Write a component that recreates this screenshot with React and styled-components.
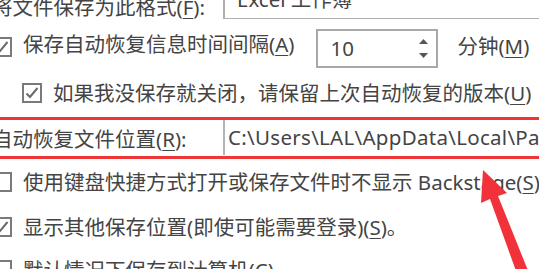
import React from 'react'
import styled, { createGlobalStyle } from 'styled-components'

const GlobalStyle = createGlobalStyle`
  html, body {
    margin: 0;
    padding: 0;
    background: #ffffff;
    overflow: hidden;
  }
  body {
    width: 539px;
    height: 269px;
    position: relative;
    font-family: "Noto Sans", "Noto Sans CJK SC", sans-serif;
    color: #444444;
  }
`

const Page = styled.div`
  margin: -20px 0 0 -8px;
  width: 600px;
`

const Row = styled.div`
  display: flex;
  align-items: ${p => p.$align || 'center'};
  height: ${p => p.$h}px;
  padding-left: ${p => p.$indent || 0}px;
  box-sizing: border-box;
  white-space: nowrap;
`

const FieldRow = styled.div`
  display: grid;
  grid-template-columns: 231px 1fr;
  align-items: ${p => p.$align || 'center'};
  height: ${p => p.$h}px;
  box-sizing: border-box;
  white-space: nowrap;
`

const Text = styled.span`
  font-size: 20.5px;
  line-height: 26px;
  padding-left: ${p => p.$pl || 0}px;
  padding-top: ${p => p.$pt || 0}px;
  padding-bottom: ${p => p.$pb || 0}px;
`

const Key = styled.u`
  text-decoration-thickness: 1px;
  text-underline-offset: 3px;
`

const Box = styled.span`
  flex: none;
  width: 20px;
  height: 20px;
  box-sizing: border-box;
  border: 2px solid #7a7a7a;
  margin-right: 11px;
  display: flex;
  align-items: center;
  justify-content: center;
`

const Select = styled.div`
  height: 39px;
  box-sizing: border-box;
  border: 1.5px solid #b0b0b0;
  border-left-width: 2px;
  padding-left: 12px;
  font-size: 20.5px;
  line-height: 36px;
`

const Spin = styled.div`
  display: flex;
  align-items: center;
  justify-content: space-between;
  width: 122px;
  height: 39px;
  box-sizing: border-box;
  border: 2px solid #a8a8a8;
  margin: 2px 19px 0 22px;
  padding: 0 8px 0 12px;
  font-size: 20.5px;
`

const Arrows = styled.div`
  display: flex;
  flex-direction: column;
  gap: 9px;
`

const RedBox = styled.div`
  border-top: 3.5px solid #ef3535;
  border-bottom: 3.5px solid #ef3535;
  height: 42px;
  box-sizing: border-box;
`

const PathField = styled.div`
  height: 100%;
  border-left: 2px solid #b4b4b4;
  padding-left: 3px;
  font-size: 20.5px;
  line-height: 35px;
  letter-spacing: 0.3px;
  overflow: hidden;
`

const Overlay = styled.svg`
  position: absolute;
  left: 0;
  top: 0;
  pointer-events: none;
`

const Check = ({ on }) => (
  <Box>
    {on && (
      <svg width="16" height="16" viewBox="0 0 16 16">
        <polyline points="2.5,8.5 6,12 13.5,3" fill="none" stroke="#6a6a6a" strokeWidth="2" />
      </svg>
    )}
  </Box>
)

const App = () => {
  return (
    <>
      <GlobalStyle />
      <Page>
        <FieldRow $h={46} $align="start">
          <Text $pt={14}>将文件保存为此格式(<Key>F</Key>):</Text>
          <Select>Excel 工作簿</Select>
        </FieldRow>

        <Row $h={42}>
          <Check on />
          <Text $pb={6}>保存自动恢复信息时间间隔(<Key>A</Key>)</Text>
          <Spin>
            <span>10</span>
            <Arrows>
              <svg width="9" height="5" viewBox="0 0 9 5"><polygon points="4.5,0 9,5 0,5" fill="#555" /></svg>
              <svg width="9" height="5" viewBox="0 0 9 5"><polygon points="0,0 9,0 4.5,5" fill="#555" /></svg>
            </Arrows>
          </Spin>
          <Text $pb={2}>分钟(<Key>M</Key>)</Text>
        </Row>

        <Row $h={49} $indent={30}>
          <Check on />
          <Text>如果我没保存就关闭，请保留上次自动恢复的版本(<Key>U</Key>)</Text>
        </Row>

        <RedBox>
          <FieldRow $h={35}>
            <Text $pt={2}>自动恢复文件位置(<Key>R</Key>):</Text>
            <PathField>C:\Users\LAL\AppData\Local\Packages</PathField>
          </FieldRow>
        </RedBox>

        <Row $h={46}>
          <Check />
          <Text>使用键盘快捷方式打开或保存文件时不显示 Backstage(<Key>S</Key>)</Text>
        </Row>

        <Row $h={43}>
          <Check on />
          <Text>显示其他保存位置(即使可能需要登录)(<Key>S</Key>)。</Text>
        </Row>

        <Row $h={43}>
          <Check />
          <Text>默认情况下保存到计算机(<Key>C</Key>)</Text>
        </Row>
      </Page>

      <Overlay width="539" height="269" viewBox="0 0 539 269">
        <polygon
          points="483,170 507,193 498,196 531,278 520,282 490,199 481,203"
          fill="#f1323a"
        />
      </Overlay>
    </>
  )
}

export default App
